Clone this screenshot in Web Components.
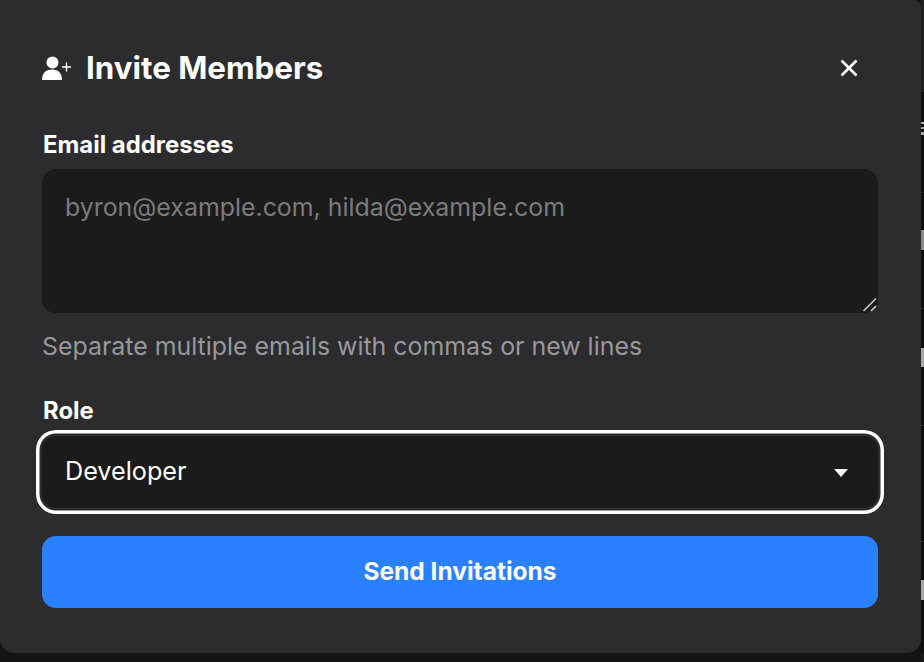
<!DOCTYPE html>
<html>
  <head>
    <meta charset="utf-8">
    <title>Invite Members</title>
    <style>
      html,
      body {
        margin: 0;
        padding: 0;
        height: 100%;
        background: #141415;
        overflow: hidden;
        font-family: Inter, "Liberation Sans", sans-serif;
      }
    </style>
  </head>
  <body>
    <template id="page-backdrop-tpl">
      <style>
        /* the bit of the page behind the dialog, only 3px of it shows on the right */
        :host {
          display: block;
          position: absolute;
          top: 0;
          right: 0;
          width: 3px;
          height: 662px;
          background: linear-gradient(to bottom,
            #202022 0 92px, #0f0f10 92px 122px,
            #a8a8a8 122px 124px, #0f0f10 124px 127px,
            #a8a8a8 127px 129px, #0f0f10 129px 132px,
            #a8a8a8 132px 135px, #0f0f10 135px 192px,
            #232325 192px 193px, #0f0f10 193px 230px,
            #8a8a8a 230px 250px, #0f0f10 250px 308px,
            #232325 308px 309px, #0f0f10 309px 348px,
            #a8a8a8 348px 367px, #0f0f10 367px 425px,
            #232325 425px 426px, #0f0f10 426px 541px,
            #232325 541px 542px, #0f0f10 542px 580px,
            #a8a8a8 580px 600px, #0f0f10 600px 653px,
            #19191a 653px);
        }
      </style>
    </template>

    <template id="invite-dialog-tpl">
      <style>
        :host {
          display: flex;
          flex-direction: column;
          position: relative;
          box-sizing: border-box;
          width: 921px;
          height: 653px;
          padding: 44px 43px 0 42px;
          background: #2c2c2f;
          border-radius: 0 8px 14px 14px;
          color: #fff;
        }
      </style>
      <slot></slot>
    </template>

    <template id="dialog-header-tpl">
      <style>
        :host {
          display: flex;
          align-items: center;
          height: 48px;
          margin-bottom: 37px;
        }
        svg.user {
          width: 30px;
          height: 24px;
          margin-right: 14px;
          flex: none;
        }
        h2 {
          flex: 1;
          margin: 0;
          font-size: 31.3px;
          line-height: 48px;
          font-weight: 700;
          color: #fff;
        }
        svg.close {
          width: 18px;
          height: 18px;
          margin-right: 20px;
          flex: none;
        }
      </style>
      <svg class="user" viewBox="0 0 30 24">
        <circle cx="10.500" cy="6.500" r="6" fill="#fff"/>
        <path d="M0 24c0-6.500 3.500-10.500 10-10.500S20 17.500 20 24z" fill="#fff"/>
        <path d="M20 11h9M24.500 6.500v9" stroke="#fff" stroke-width="1.400" fill="none"/>
      </svg>
      <h2><slot></slot></h2>
      <svg class="close" viewBox="0 0 18 18">
        <path d="M1.500 1.500l15 15M16.500 1.500l-15 15" stroke="#fff" stroke-width="2.600" fill="none"/>
      </svg>
    </template>

    <template id="form-field-tpl">
      <style>
        :host {
          display: flex;
          flex-direction: column;
        }
        label {
          display: block;
          padding-left: 1px;
          font-size: 23.900px;
          line-height: 32px;
          font-weight: 700;
          color: #fff;
          margin-bottom: 8px;
        }
      </style>
      <label><slot name="label"></slot></label>
      <slot></slot>
    </template>

    <template id="email-box-tpl">
      <style>
        :host {
          display: block;
          position: relative;
          box-sizing: border-box;
          height: 144px;
          padding: 22px 23px;
          background: #1b1b1c;
          border-radius: 14px;
          font-size: 24.900px;
          line-height: 32px;
          color: #7b7b7e;
        }
        svg {
          position: absolute;
          right: 1px;
          bottom: 1px;
          width: 15px;
          height: 15px;
        }
      </style>
      <slot></slot>
      <svg viewBox="0 0 15 15">
        <path d="M1.500 14L14 1.500M9 14L14 9" stroke="#c4c4c4" stroke-width="1.700" fill="none"/>
      </svg>
    </template>

    <template id="help-text-tpl">
      <style>
        :host {
          display: block;
          margin-top: 17px;
          margin-bottom: 33px;
          font-size: 24.900px;
          line-height: 32px;
          color: #98989b;
        }
      </style>
      <slot></slot>
    </template>

    <template id="role-select-tpl">
      <style>
        :host {
          display: flex;
          align-items: center;
          justify-content: space-between;
          box-sizing: border-box;
          height: 72px;
          margin-top: 1px;
          padding: 0 30.500px 2px 23px;
          background: #1b1b1c;
          border-radius: 14px;
          font-size: 25.200px;
          color: #fff;
          box-shadow: 0 0 0 2.500px #2c2c2f, 0 0 0 6px #fff;
        }
        i {
          width: 0;
          height: 0;
          margin-top: 3px;
          border-left: 7.500px solid transparent;
          border-right: 7.500px solid transparent;
          border-top: 8px solid #fff;
        }
      </style>
      <slot></slot>
      <i></i>
    </template>

    <template id="send-button-tpl">
      <style>
        :host {
          display: flex;
          align-items: center;
          justify-content: center;
          box-sizing: border-box;
          height: 72px;
          margin-top: 28px;
          padding-bottom: 2px;
          background: #2a80ff;
          border-radius: 14px;
          font-size: 24.500px;
          font-weight: 700;
          color: #fff;
        }
      </style>
      <slot></slot>
    </template>

    <page-backdrop></page-backdrop>
    <invite-dialog>
      <dialog-header>Invite Members</dialog-header>
      <form-field>
        <span slot="label">Email addresses</span>
        <email-box>byron@example.com, hilda@example.com</email-box>
      </form-field>
      <help-text>Separate multiple emails with commas or new lines</help-text>
      <form-field>
        <span slot="label">Role</span>
        <role-select>Developer</role-select>
      </form-field>
      <send-button>Send Invitations</send-button>
    </invite-dialog>

    <script>
      // every element just clones its template into an open shadow root
      const names = ['page-backdrop', 'invite-dialog', 'dialog-header', 'form-field', 'email-box', 'help-text', 'role-select', 'send-button']
      for (const name of names) {
        customElements.define(name, class extends HTMLElement {
          constructor() {
            super()
            const template = document.getElementById(name + '-tpl').content
            this.attachShadow({mode: 'open'}).appendChild(template.cloneNode(true))
          }
        })
      }
    </script>
  </body>
</html>
